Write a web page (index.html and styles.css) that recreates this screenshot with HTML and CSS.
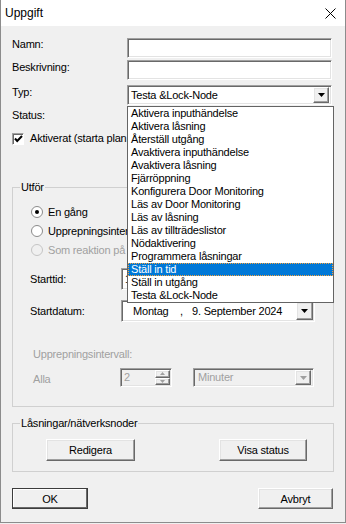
FILE: index.html
```html
<!DOCTYPE html>
<html lang="sv">
<head>
    <meta charset="UTF-8">
    <title>Uppgift</title>
    <link rel="stylesheet" href="styles.css">
</head>
<body>
<div class="window">
    <div class="titlebar">
        <span class="title">Uppgift</span>
        <svg class="close" width="11" height="11" viewBox="0 0 11 11">
            <path d="M0.5 0.5L10.5 10.5M10.5 0.5L0.5 10.5" stroke="#000" stroke-width="1"/>
        </svg>
    </div>

    <div class="content">
        <div class="row row-first">
            <span class="lbl">Namn:</span>
            <div class="field sunken"></div>
        </div>
        <div class="row">
            <span class="lbl">Beskrivning:</span>
            <div class="field sunken"></div>
        </div>
        <div class="row row-typ">
            <span class="lbl">Typ:</span>
            <div class="combo sunken">
                <span class="combo-text">Testa &amp;Lock-Node</span>
                <span class="arrow-btn raised">
                    <svg width="7" height="4" viewBox="0 0 7 4"><polygon points="0,0 7,0 3.5,4" fill="#000"/></svg>
                </span>
                <!-- uppfälld lista -->
                <ul class="droplist">
                    <li>Aktivera inputhändelse</li>
                    <li>Aktivera låsning</li>
                    <li>Återställ utgång</li>
                    <li>Avaktivera inputhändelse</li>
                    <li>Avaktivera låsning</li>
                    <li>Fjärröppning</li>
                    <li>Konfigurera Door Monitoring</li>
                    <li>Läs av Door Monitoring</li>
                    <li>Läs av låsning</li>
                    <li>Läs av tillträdeslistor</li>
                    <li>Nödaktivering</li>
                    <li>Programmera låsningar</li>
                    <li class="selected">Ställ in tid</li>
                    <li>Ställ in utgång</li>
                    <li>Testa &amp;Lock-Node</li>
                </ul>
            </div>
        </div>
        <div class="row row-status">
            <span class="lbl">Status:</span>
        </div>
        <div class="row row-check">
            <span class="checkbox">
                <svg width="9" height="8" viewBox="0 0 9 8"><polyline points="1,3.5 3.2,6 8,1" fill="none" stroke="#000" stroke-width="2"/></svg>
            </span>
            <span class="clip-text">Aktiverat (starta plan</span>
        </div>

        <fieldset class="group group-utfor">
            <legend>Utför</legend>
            <div class="radios">
                <div class="radio-row">
                    <svg class="radio" width="12" height="12" viewBox="0 0 12 12">
                        <circle cx="6" cy="6" r="5.5" fill="#fff" stroke="#8a8a8a"/>
                        <circle cx="6" cy="6" r="2" fill="#000"/>
                    </svg>
                    <span>En gång</span>
                </div>
                <div class="radio-row">
                    <svg class="radio" width="12" height="12" viewBox="0 0 12 12">
                        <circle cx="6" cy="6" r="5.5" fill="#fff" stroke="#8a8a8a"/>
                    </svg>
                    <span class="clip-text">Upprepningsinter</span>
                </div>
                <div class="radio-row disabled">
                    <svg class="radio" width="12" height="12" viewBox="0 0 12 12">
                        <circle cx="6" cy="6" r="5.5" fill="#f0f0f0" stroke="#c4c4c4"/>
                    </svg>
                    <span class="clip-text">Som reaktion på</span>
                </div>
            </div>

            <div class="row row-time">
                <span class="lbl lbl-sched">Starttid:</span>
                <div class="picker picker-time sunken">
                    <span class="picker-text">1</span>
                </div>
            </div>
            <div class="row row-date">
                <span class="lbl lbl-sched">Startdatum:</span>
                <div class="picker picker-date sunken">
                    <span class="picker-text"><span class="dt-day">Montag</span><span class="dt-comma">,</span>9. September 2024</span>
                    <span class="arrow-btn arrow-date raised">
                        <svg width="7" height="4" viewBox="0 0 7 4"><polygon points="0,0 7,0 3.5,4" fill="#000"/></svg>
                    </span>
                </div>
            </div>

            <div class="interval-title disabled">Upprepningsintervall:</div>
            <div class="row row-interval">
                <span class="lbl lbl-alla disabled">Alla</span>
                <div class="spin sunken">
                    <span class="spin-text">2</span>
                    <span class="spin-btns">
                        <span class="spin-btn raised">
                            <svg width="5" height="3" viewBox="0 0 5 3"><polygon points="0,3 5,3 2.5,0" fill="#a0a0a0"/></svg>
                        </span>
                        <span class="spin-btn raised">
                            <svg width="5" height="3" viewBox="0 0 5 3"><polygon points="0,0 5,0 2.5,3" fill="#a0a0a0"/></svg>
                        </span>
                    </span>
                </div>
                <div class="combo combo-unit sunken">
                    <span class="combo-text disabled">Minuter</span>
                    <span class="arrow-btn raised">
                        <svg width="7" height="4" viewBox="0 0 7 4"><polygon points="0,0 7,0 3.5,4" fill="#a0a0a0"/></svg>
                    </span>
                </div>
            </div>
        </fieldset>

        <fieldset class="group group-locks">
            <legend>Låsningar/nätverksnoder</legend>
            <div class="lock-buttons">
                <button type="button" class="btn raised btn-edit">Redigera</button>
                <button type="button" class="btn raised btn-status">Visa status</button>
            </div>
        </fieldset>

        <div class="footer">
            <button type="button" class="btn raised btn-default">OK</button>
            <button type="button" class="btn raised btn-cancel">Avbryt</button>
        </div>
    </div>
</div>
</body>
</html>
```

FILE: styles.css
```css
body {
    margin: 0;
    background: #f0f0f0;
}

.window {
    box-sizing: border-box;
    width: 346px;
    height: 523px;
    border: 1px solid #8c8c8c;
    border-top: none;
    background: #f0f0f0;
    font-family: "Liberation Sans", Arial, sans-serif;
    font-size: 11px;
    letter-spacing: -0.2px;
    color: #000;
}

.titlebar {
    height: 26px;
    background: #fff;
    display: flex;
    align-items: center;
    justify-content: space-between;
    padding: 0 9px 0 4px;
}

.title {
    font-size: 12px;
    letter-spacing: 0;
}

.close {
    display: block;
    margin-top: 1px;
}

.content {
    padding: 0 12px 0 11px;
}

/* 3D-kanter som i Windows klassisk stil */
.sunken {
    box-sizing: border-box;
    background: #fff;
    border: 1px solid;
    border-color: #a0a0a0 #fff #fff #a0a0a0;
    box-shadow: inset 1px 1px #696969, inset -1px -1px #e3e3e3;
}

.raised {
    box-sizing: border-box;
    background: #f0f0f0;
    border: 1px solid;
    border-color: #fff #696969 #696969 #fff;
    box-shadow: inset -1px -1px #a0a0a0, inset 1px 1px #e3e3e3;
}

.disabled {
    color: #a0a0a0;
}

.clip-text {
    white-space: nowrap;
}

.row {
    display: flex;
    line-height: 13px;
}

.lbl {
    width: 115px;
    flex-shrink: 0;
    padding-top: 1px;
}

.row-first {
    margin-top: 12px;
}

.row-first .lbl {
    padding-top: 0;
}

.row + .row {
    margin-top: 2px;
}

.field {
    width: 205px;
    height: 20px;
}

.row-typ {
    margin-top: 5px !important;
}

.combo {
    position: relative;
    width: 205px;
    height: 20px;
    display: flex;
    align-items: center;
    padding: 0 2px 0 3px;
}

.combo-text {
    flex: 1;
}

.arrow-btn {
    width: 16px;
    height: 16px;
    display: flex;
    align-items: center;
    justify-content: center;
}

.arrow-btn svg {
    display: block;
}

.droplist {
    position: absolute;
    left: -1px;
    top: 20px;
    z-index: 10;
    width: 207px;
    box-sizing: border-box;
    margin: 0;
    padding: 0;
    list-style: none;
    background: #fff;
    border: 1px solid #646464;
}

.droplist li {
    height: 13px;
    line-height: 13px;
    padding-left: 3px;
    white-space: nowrap;
}

.droplist li.selected {
    background: #0078d7;
    color: #fff;
    outline: 1px dotted #f7a23c;
    outline-offset: -1px;
}

.row-status {
    margin-top: 4px !important;
}

.row-status .lbl {
    padding-top: 0;
}

.row-check {
    margin-top: 10px !important;
    align-items: flex-start;
}

.checkbox {
    width: 12px;
    height: 12px;
    margin: 1px 6px 0 0;
    box-sizing: border-box;
    background: #fff;
    border: 1px solid;
    border-color: #a0a0a0 #fff #fff #a0a0a0;
    box-shadow: inset 1px 1px #696969;
    display: flex;
    align-items: center;
    justify-content: center;
}

.checkbox svg {
    display: block;
}

.group {
    box-sizing: border-box;
    width: 322px;
    margin: 0;
    padding: 0;
    border: 1px solid #d0d0d0;
    min-width: 0;
}

.group legend {
    margin-left: 7px;
    padding: 0 1px;
    line-height: 12px;
}

.group-utfor {
    margin-top: 36px;
    padding-bottom: 19px;
}

.radios {
    padding: 9px 0 0 18px;
}

.radio-row {
    height: 19px;
    display: flex;
    align-items: center;
    gap: 5px;
}

.radio {
    display: block;
}

.row-time {
    margin-top: 9px;
    align-items: center;
}

.row-date {
    margin-top: 10px !important;
    align-items: center;
}

.lbl-sched {
    width: 91px;
    padding: 1px 0 0 17px;
}

.picker {
    height: 22px;
    display: flex;
    align-items: center;
    padding: 0 1px 0 11px;
}

.picker-time {
    width: 110px;
    padding-left: 3px;
}

.picker-date {
    width: 194px;
}

.picker-text {
    flex: 1;
    white-space: nowrap;
}

.dt-day {
    display: inline-block;
    width: 47px;
}

.dt-comma {
    display: inline-block;
    width: 12px;
}

.arrow-date {
    width: 17px;
    height: 18px;
}

.interval-title {
    margin-top: 26px;
    padding-left: 20px;
    line-height: 13px;
}

.row-interval {
    margin-top: 7px;
    align-items: center;
}

.lbl-alla {
    width: 87px;
    padding: 3px 0 0 20px;
}

.spin {
    width: 52px;
    height: 19px;
    display: flex;
    align-items: center;
    padding: 1px 1px 1px 3px;
    background: #f0f0f0;
}

.spin-text {
    flex: 1;
    color: #a0a0a0;
}

.spin-btns {
    display: flex;
    flex-direction: column;
    width: 15px;
    height: 15px;
}

.spin-btn {
    flex: 1;
    display: flex;
    align-items: center;
    justify-content: center;
}

.spin-btn svg {
    display: block;
}

.combo-unit {
    width: 121px;
    height: 19px;
    margin-left: 21px;
    background: #f0f0f0;
    padding-left: 4px;
}

.combo-unit .arrow-btn {
    height: 15px;
}

.group-locks {
    margin-top: 10px;
    padding-bottom: 10px;
}

.lock-buttons {
    display: flex;
    gap: 84px;
    padding: 10px 0 0 33px;
}

.btn {
    font-family: inherit;
    font-size: 11px;
    letter-spacing: -0.2px;
    color: #000;
    height: 22px;
    padding: 0;
    cursor: pointer;
}

.btn-edit {
    width: 89px;
}

.btn-status {
    width: 88px;
}

.footer {
    display: flex;
    justify-content: space-between;
    margin-top: 16px;
}

.footer .btn {
    height: 21px;
}

.btn-default {
    width: 76px;
    border-color: #3c3c3c;
    box-shadow: inset -1px -1px #696969, inset 1px 1px #fff;
}

.btn-cancel {
    width: 75px;
}
```
